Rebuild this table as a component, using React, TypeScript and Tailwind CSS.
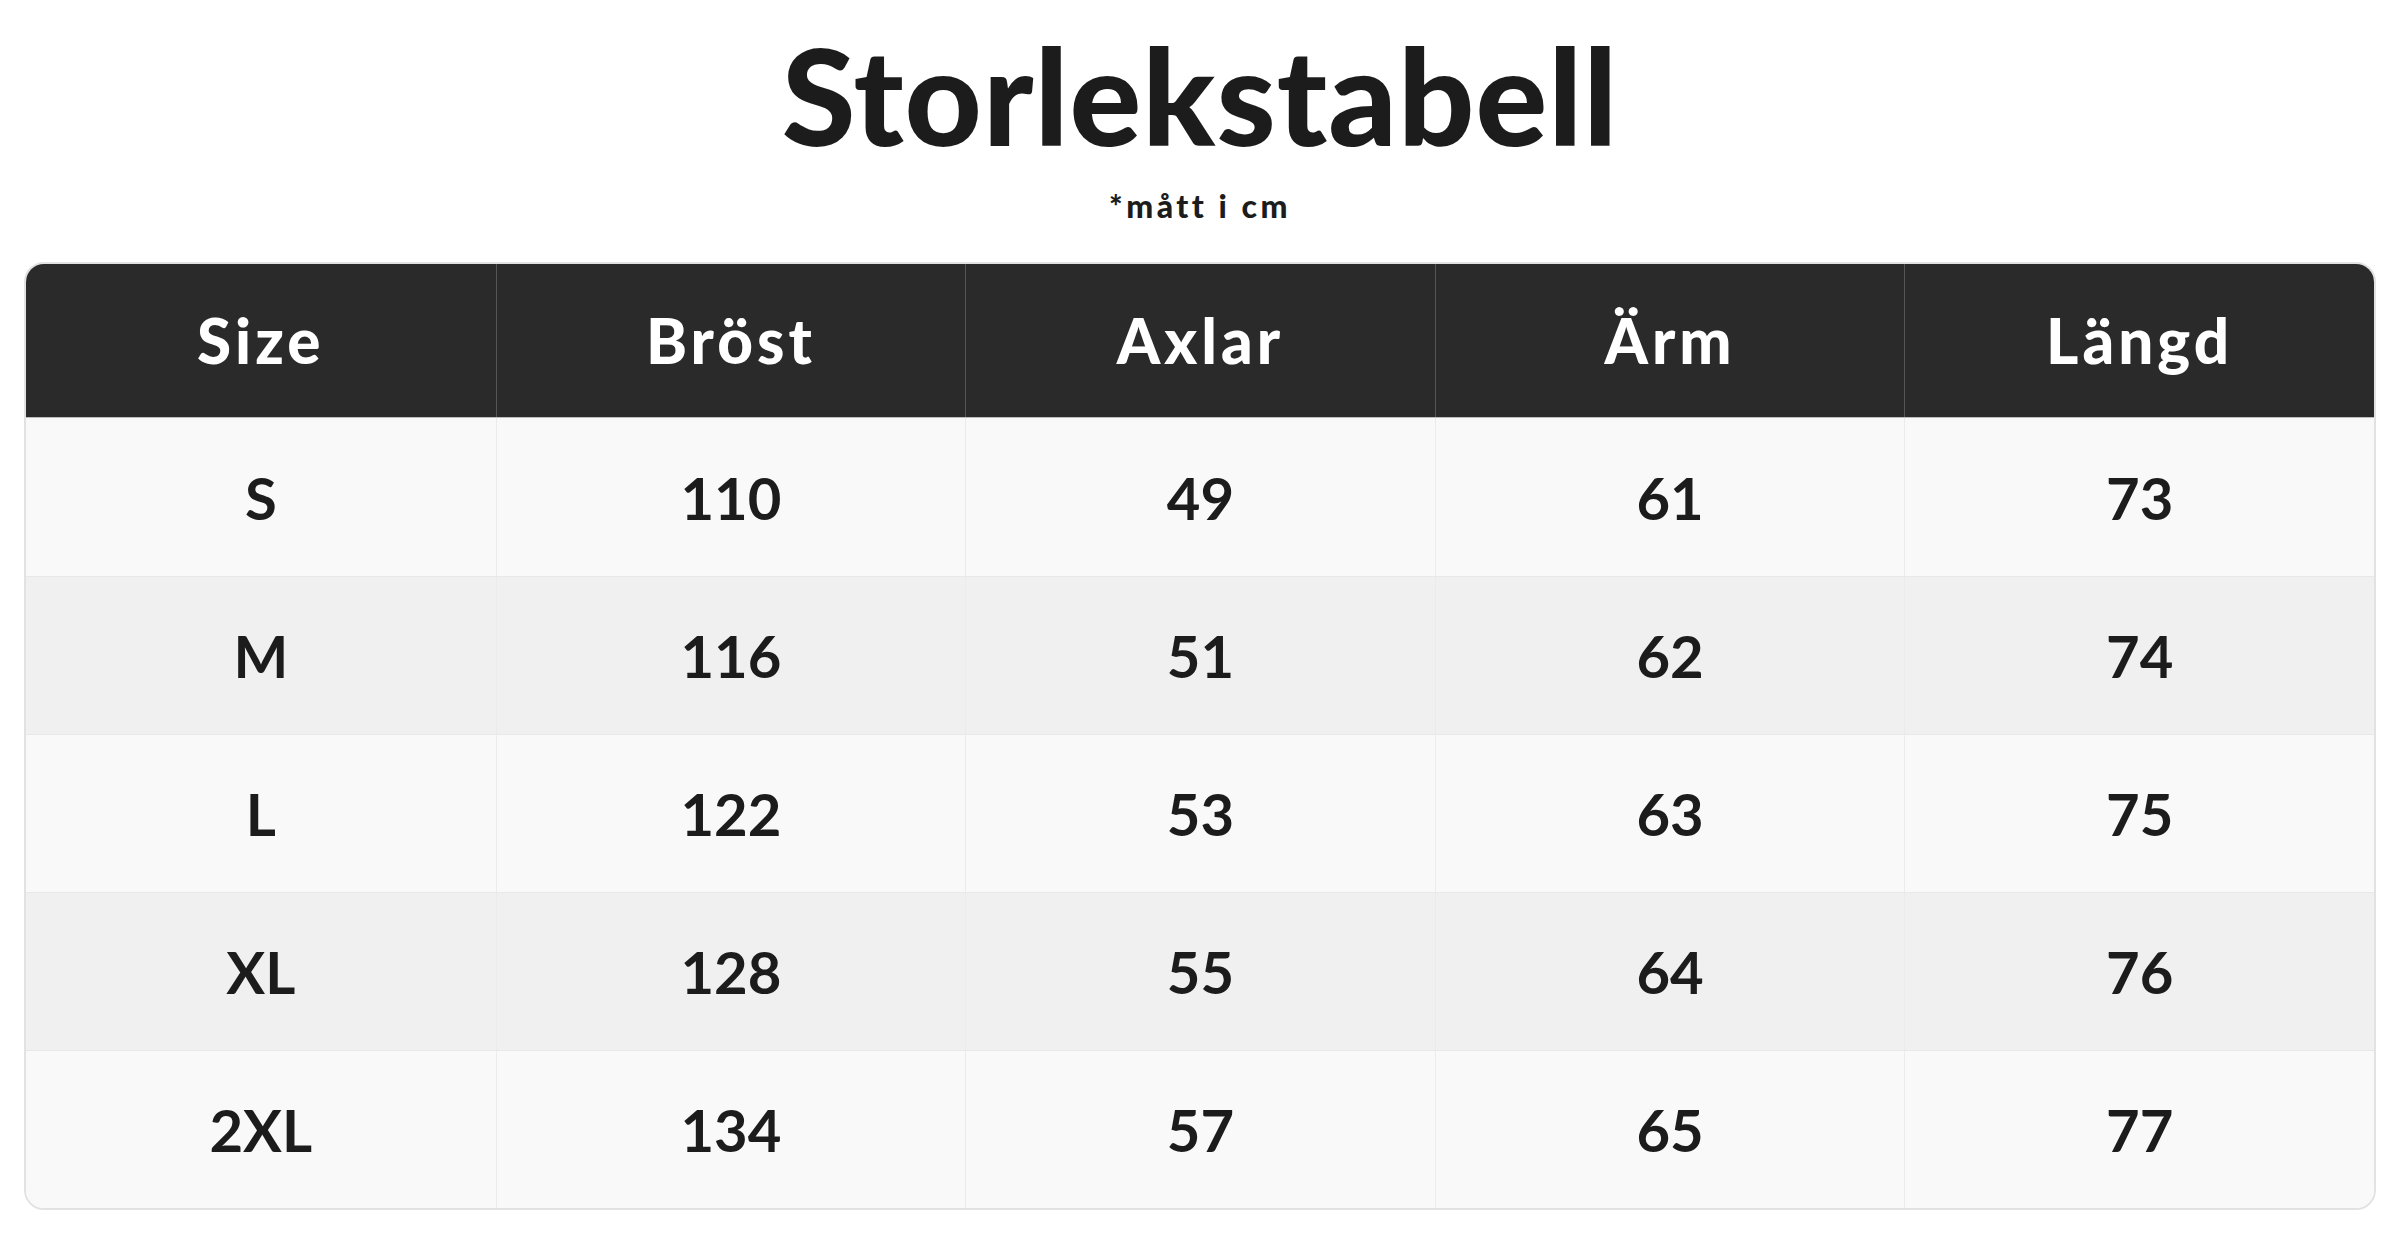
import React from "react";

const headers = ["Size", "Bröst", "Axlar", "Ärm", "Längd"];
const rows = [
  ["S", "110", "49", "61", "73"],
  ["M", "116", "51", "62", "74"],
  ["L", "122", "53", "63", "75"],
  ["XL", "128", "55", "64", "76"],
  ["2XL", "134", "57", "65", "77"],
];

export default function App() {
  return (
    <div
      className="min-h-[1234px] bg-white px-[24px] pt-[28px] text-[#1c1c1c]"
      style={{ fontFamily: "Lato, 'Noto Sans', sans-serif" }}
    >
      <h1 className="text-center text-[134px] font-black leading-none tracking-[1px]">
        Storlekstabell
      </h1>
      <p className="mt-[28px] text-center text-[32px] font-black leading-none tracking-[3.5px]">
        *mått i cm
      </p>
      <div className="mt-[40px] overflow-hidden rounded-[20px] border-2 border-[#e2e2e2]">
        <div className="grid grid-cols-5 h-[154px] bg-[#2a2a2a] border-b border-[#bdbdbd]">
          {headers.map((h, i) => (
            <div
              key={h}
              className={`flex items-center justify-center text-[62px] font-black text-white tracking-[4px] ${
                i > 0 ? "border-l border-[#555555]" : ""
              }`}
            >
              {h}
            </div>
          ))}
        </div>
        {rows.map((r, ri) => (
          <div
            key={ri}
            className={`grid grid-cols-5 h-[158px] ${
              ri % 2 === 0 ? "bg-[#f9f9f9]" : "bg-[#f0f0f0]"
            } ${ri > 0 ? "border-t border-[#e8e8e8]" : ""}`}
          >
            {r.map((c, ci) => (
              <div
                key={ci}
                className={`flex items-center justify-center text-[58px] font-bold ${
                  ci > 0 ? "border-l border-[#ebebeb]" : ""
                }`}
              >
                {c}
              </div>
            ))}
          </div>
        ))}
      </div>
    </div>
  );
}
